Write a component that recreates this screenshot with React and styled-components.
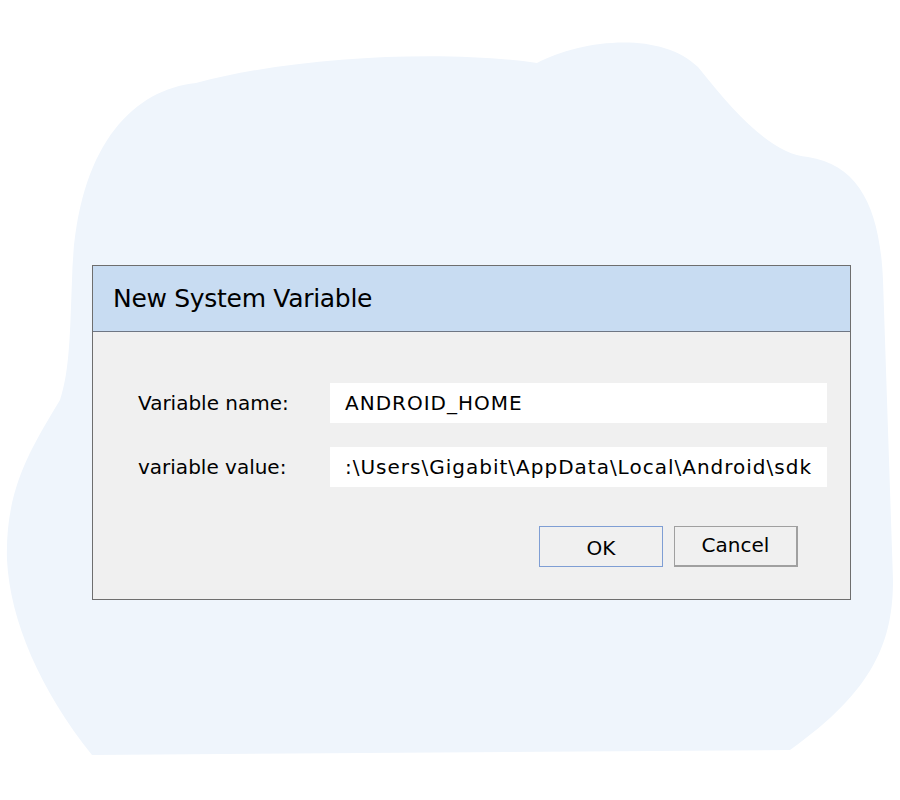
import React from "react";
import styled, { createGlobalStyle } from "styled-components";

const Global = createGlobalStyle`
  html, body {
    margin: 0;
    padding: 0;
    background: #ffffff;
  }
  body {
    font-family: "DejaVu Sans", "Liberation Sans", sans-serif;
    color: #000;
  }
`;

const Page = styled.div`
  position: relative;
  width: 900px;
  height: 800px;
  overflow: hidden;
`;

const Blob = styled.svg`
  position: absolute;
  left: 0;
  top: 0;
  z-index: 0;
`;

const Dialog = styled.div`
  position: relative;
  z-index: 1;
  margin: 265px 0 0 92px;
  width: 757px;
  border: 1px solid #6e6e6e;
  background: #f0f0f0;
`;

const Header = styled.div`
  height: 65px;
  background: #c8dcf2;
  border-bottom: 1px solid #6e7684;
  display: flex;
  align-items: center;
  padding-left: 20px;
  font-size: 25px;
  letter-spacing: -0.3px;
`;

const Body = styled.div`
  padding: 51px 23px 32px 45px;
`;

const Fields = styled.div`
  display: grid;
  grid-template-columns: 192px 1fr;
  row-gap: 24px;
  align-items: center;
`;

const Label = styled.div`
  font-size: 20px;
`;

const Input = styled.div`
  height: 40px;
  background: #ffffff;
  display: flex;
  align-items: center;
  padding-left: 15px;
  font-size: 20px;
  letter-spacing: 1px;
  white-space: nowrap;
  overflow: hidden;
`;

const Buttons = styled.div`
  display: flex;
  justify-content: flex-end;
  gap: 11px;
  margin: 39px 29px 0 0;
`;

const Button = styled.div`
  width: 124px;
  height: 41px;
  box-sizing: border-box;
  display: flex;
  align-items: center;
  justify-content: center;
  font-size: 20px;
  background: #f0f0f0;
  border: 1px solid ${(p) => (p.$primary ? "#7f9ed4" : "#a0a0a0")};
  padding-top: ${(p) => (p.$primary ? "2px" : "0")};
  padding-bottom: ${(p) => (p.$primary ? "0" : "3px")};
  ${(p) => !p.$primary && "border-width: 1px 2px 2px 1px;"}
`;

const App = () => {
  return (
    <Page>
      <Global />
      <Blob width="900" height="800" viewBox="0 0 900 800">
        <path
          fill="#eff5fc"
          d="M 72 280 C 75 150, 130 90, 196 83 C 300 55, 450 50, 537 63 C 580 40, 660 30, 698 67 C 740 120, 775 155, 808 157 C 860 165, 880 210, 883 280 L 893 580 C 893 640, 875 690, 790 750 L 92 755 C 40 690, 10 620, 7 560 C 5 490, 30 450, 60 400 C 70 370, 70 330, 72 280 Z"
        />
      </Blob>
      <Dialog>
        <Header>New System Variable</Header>
        <Body>
          <Fields>
            <Label>Variable name:</Label>
            <Input>ANDROID_HOME</Input>
            <Label>variable value:</Label>
            <Input>:\Users\Gigabit\AppData\Local\Android\sdk</Input>
          </Fields>
          <Buttons>
            <Button $primary>OK</Button>
            <Button>Cancel</Button>
          </Buttons>
        </Body>
      </Dialog>
    </Page>
  );
};

export default App;
